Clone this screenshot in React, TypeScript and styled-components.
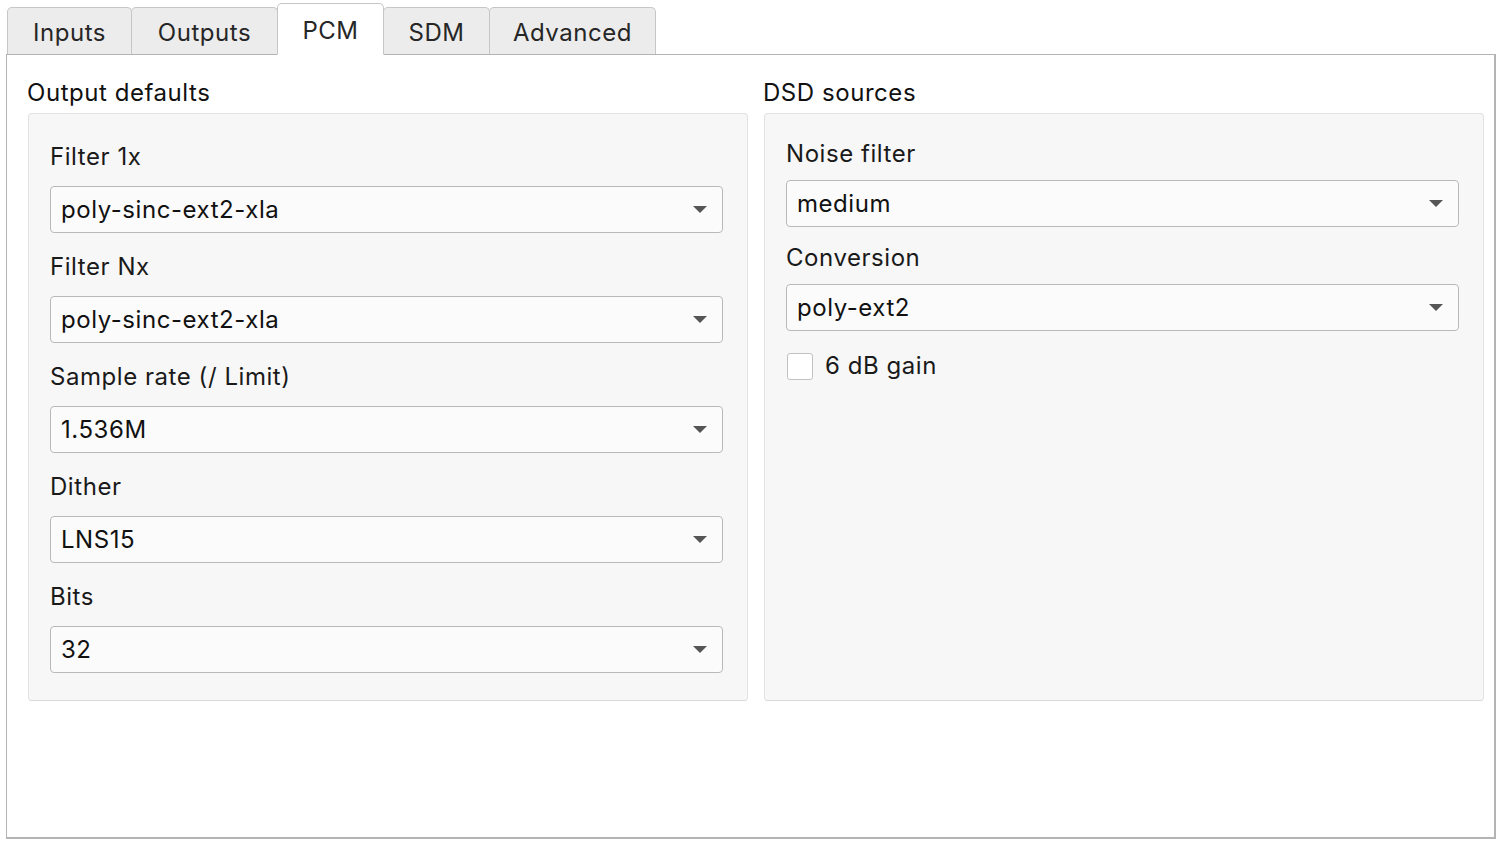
import React from 'react'
import styled, { createGlobalStyle } from 'styled-components'

const GlobalStyle = createGlobalStyle`
  html, body {
    margin: 0;
    padding: 0;
    background: #ffffff;
  }
  body {
    font-family: Inter, "Noto Sans", "Liberation Sans", sans-serif;
    letter-spacing: 0.55px;
    color: #1c1c1c;
    -webkit-font-smoothing: antialiased;
  }
`

interface ComboProps {
  value: string
}

const Combo = ({ value }: ComboProps) => (
  <S.Combo>
    <S.ComboText>{value}</S.ComboText>
    <S.Arrow width='16' height='8' viewBox='0 0 16 8'>
      <path d='M1 0 L15 0 L8 7 Z' fill='#555' />
    </S.Arrow>
  </S.Combo>
)

const tabs = [
  { name: 'Inputs', width: 125 },
  { name: 'Outputs', width: 147 },
  { name: 'PCM', width: 107, active: true },
  { name: 'SDM', width: 107 },
  { name: 'Advanced', width: 167 },
]

const outputFields = [
  { label: 'Filter 1x', value: 'poly-sinc-ext2-xla' },
  { label: 'Filter Nx', value: 'poly-sinc-ext2-xla' },
  { label: 'Sample rate (/ Limit)', value: '1.536M' },
  { label: 'Dither', value: 'LNS15' },
  { label: 'Bits', value: '32' },
]

const dsdFields = [
  { label: 'Noise filter', value: 'medium' },
  { label: 'Conversion', value: 'poly-ext2' },
]

export default function App() {
  return (
    <>
      <GlobalStyle />
      <S.Window>
        <S.TabBar>
          {tabs.map(t => (
            <S.Tab key={t.name} $active={!!t.active} $width={t.width}>
              {t.name}
            </S.Tab>
          ))}
        </S.TabBar>
        <S.Pane>
          <S.Column>
            <S.GroupTitle>Output defaults</S.GroupTitle>
            <S.GroupBox $top={28} $bottom={25}>
              {outputFields.map(f => (
                <S.Field key={f.label} $labelGap={14} $after={19}>
                  <S.Label>{f.label}</S.Label>
                  <Combo value={f.value} />
                </S.Field>
              ))}
            </S.GroupBox>
          </S.Column>
          <S.Column>
            <S.GroupTitle>DSD sources</S.GroupTitle>
            <S.GroupBox $top={25} $bottom={25}>
              {dsdFields.map(f => (
                <S.Field key={f.label} $labelGap={11} $after={16}>
                  <S.Label>{f.label}</S.Label>
                  <Combo value={f.value} />
                </S.Field>
              ))}
              <S.CheckRow>
                <S.CheckBox />
                <S.Label>6 dB gain</S.Label>
              </S.CheckRow>
            </S.GroupBox>
          </S.Column>
        </S.Pane>
      </S.Window>
    </>
  )
}

const S = {
  Window: styled.div`
    width: 1506px;
    height: 848px;
    padding: 2px 0 0 6px;
    box-sizing: border-box;
    display: flex;
    flex-direction: column;
  `,
  TabBar: styled.div`
    display: flex;
    align-items: flex-end;
    padding-left: 1px;
    height: 52px;
    position: relative;
    z-index: 2;
  `,
  Tab: styled.div<{ $active: boolean; $width: number }>`
    width: ${p => p.$width}px;
    height: ${p => p.$active ? 52 : 47}px;
    box-sizing: border-box;
    display: flex;
    align-items: center;
    justify-content: center;
    font-size: 24px;
    color: #262626;
    background: ${p => p.$active ? '#ffffff' : '#ececec'};
    border: 1px solid #c6c6c6;
    border-bottom: ${p => p.$active ? '1px solid #ffffff' : 'none'};
    border-radius: 5px 5px 0 0;
    margin-right: -1px;
    padding-top: 3px;
    margin-bottom: ${p => p.$active ? -1 : 0}px;
    position: relative;
    z-index: ${p => p.$active ? 2 : 1};
  `,
  Pane: styled.div`
    width: 1490px;
    height: 785px;
    box-sizing: border-box;
    border: 1px solid #b4b4b4;
    border-right-width: 2px;
    border-bottom-width: 2px;
    background: #ffffff;
    padding: 22px 12px 0 20px;
    display: grid;
    grid-template-columns: 721px 721px;
    column-gap: 15px;
    align-items: start;
  `,
  Column: styled.div`
    display: flex;
    flex-direction: column;
  `,
  GroupTitle: styled.div`
    font-size: 24px;
    line-height: 32px;
    height: 36px;
    color: #111;
  `,
  GroupBox: styled.div<{ $top: number; $bottom: number }>`
    margin-left: 1px;
    height: 588px;
    box-sizing: border-box;
    background: #f7f7f7;
    border: 1px solid #e2e2e2;
    border-bottom-color: #dadada;
    border-radius: 4px;
    padding: ${p => p.$top}px 24px ${p => p.$bottom}px 21px;
    display: flex;
    flex-direction: column;
  `,
  Field: styled.div<{ $labelGap: number; $after: number }>`
    display: flex;
    flex-direction: column;
    gap: ${p => p.$labelGap}px;
    margin-bottom: ${p => p.$after}px;
  `,
  Label: styled.div`
    font-size: 24px;
    line-height: 30px;
    height: 30px;
    color: #1a1a1a;
  `,
  Combo: styled.div`
    height: 47px;
    box-sizing: border-box;
    border: 1px solid #b9b9b9;
    border-radius: 4px;
    background: #fbfbfb;
    display: flex;
    align-items: center;
    padding: 0 14px 0 10px;
  `,
  ComboText: styled.span`
    flex: 1;
    font-size: 24px;
    color: #111;
  `,
  Arrow: styled.svg`
    display: block;
    flex: none;
  `,
  CheckRow: styled.div`
    display: flex;
    align-items: center;
    gap: 12px;
    margin-top: 4px;
  `,
  CheckBox: styled.div`
    width: 26px;
    height: 27px;
    box-sizing: border-box;
    background: #ffffff;
    border: 1px solid #c2c2c2;
    border-radius: 3px;
    margin-left: 1px;
  `,
}
